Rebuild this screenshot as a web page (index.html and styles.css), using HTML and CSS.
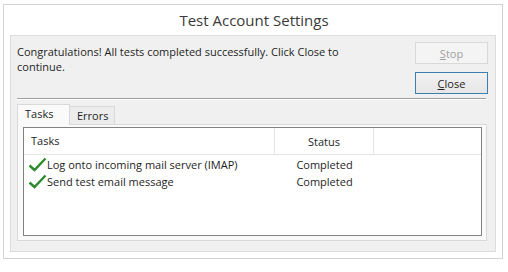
FILE: index.html
```html
<!DOCTYPE html>
<html>
<head>
<meta charset="utf-8">
<link rel="stylesheet" href="styles.css">
</head>
<body>
<div class="window">
  <div class="title">Test Account Settings</div>
  <div class="panel">
    <div class="top">
      <div class="msg">Congratulations! All tests completed successfully. Click Close to continue.</div>
      <div class="buttons">
        <button class="btn disabled"><u>S</u>top</button>
        <button class="btn default"><u>C</u>lose</button>
      </div>
    </div>
    <div class="sep"></div>
    <div class="tabs">
      <div class="tab active">Tasks</div>
      <div class="tab">Errors</div>
    </div>
    <div class="tabpanel">
      <div class="list">
        <div class="row head">
          <div class="c1">Tasks</div>
          <div class="c2">Status</div>
          <div class="c3"></div>
        </div>
        <div class="row">
          <div class="c1"><svg class="check" width="19" height="15" viewBox="0 0 19 15"><path d="M1.5 8.5 L6.5 13 L17.5 1.5" fill="none" stroke="#2c8a2c" stroke-width="2.4" stroke-linejoin="miter"/></svg>Log onto incoming mail server (IMAP)</div>
          <div class="c2">Completed</div>
          <div class="c3"></div>
        </div>
        <div class="row">
          <div class="c1"><svg class="check" width="19" height="15" viewBox="0 0 19 15"><path d="M1.5 8.5 L6.5 13 L17.5 1.5" fill="none" stroke="#2c8a2c" stroke-width="2.4" stroke-linejoin="miter"/></svg>Send test email message</div>
          <div class="c2">Completed</div>
          <div class="c3"></div>
        </div>
      </div>
    </div>
  </div>
</div>
</body>
</html>
```

FILE: styles.css
```css
html, body {
  margin: 0;
  padding: 0;
  background: #ffffff;
}
body {
  width: 508px;
  height: 272px;
  font-family: "Open Sans", "Noto Sans", sans-serif;
  font-size: 11px;
  color: #1e1e1e;
}
.window {
  margin: 4px 0 0 3px;
  width: 498px;
  height: 253px;
  border: 1px solid #d2d2d2;
  background: #ffffff;
  display: flex;
  flex-direction: column;
}
.title {
  height: 30px;
  line-height: 30px;
  text-align: center;
  font-size: 15px;
  color: #3a3a3a;
  padding-left: 2px;
}
.panel {
  flex: 1;
  margin: 0 6px 6px 6px;
  border: 1px solid #dcdcdc;
  background: #f0f0f0;
  display: flex;
  flex-direction: column;
}
.top {
  display: flex;
  padding: 6px 7px 0 6px;
}
.msg {
  flex: 1;
  padding-top: 2px;
  line-height: 15px;
  padding-right: 60px;
}
.buttons {
  display: flex;
  flex-direction: column;
  gap: 8px;
  width: 73px;
}
.btn {
  height: 22px;
  padding: 0;
  font-family: inherit;
  font-size: 11px;
  border: 1px solid #acacac;
  background: linear-gradient(#f0f0f0, #e5e5e5);
  color: #1e1e1e;
}
.btn.disabled {
  border-color: #d9d9d9;
  background: #f4f4f4;
  color: #a0a0a0;
}
.btn.default {
  border-color: #3c7fb1;
  background: linear-gradient(#f2f2f2, #e6e6e6);
}
.sep {
  margin: 4px 9px 0 6px;
  border-top: 1px solid #a0a0a0;
  border-bottom: 1px solid #ffffff;
}
.tabs {
  display: flex;
  align-items: flex-end;
  margin: 3px 0 0 6px;
  height: 21px;
}
.tab {
  height: 17px;
  line-height: 17px;
  padding: 0 7px;
  width: 30px;
  border: 1px solid #d9d9d9;
  border-bottom: none;
  background: #ececec;
  margin-left: -1px;
}
.tab:first-child {
  margin-left: 0;
}
.tab.active {
  height: 20px;
  line-height: 18px;
  width: 37px;
  background: #fafafa;
  position: relative;
  z-index: 1;
  margin-bottom: -1px;
}
.tabpanel {
  flex: 1;
  margin: 0 8px 10px 6px;
  border: 1px solid #d9d9d9;
  background: #fafafa;
  padding: 2px 4px 4px 5px;
  display: flex;
}
.list {
  flex: 1;
  border: 1px solid #828282;
  background: #ffffff;
}
.row {
  display: flex;
  height: 17px;
  line-height: 17px;
}
.row.head {
  height: 26px;
  line-height: 28px;
  border-bottom: 1px solid #e5e5e5;
  margin-bottom: 1px;
}
.c1 {
  width: 251px;
  padding-left: 4px;
  box-sizing: border-box;
  display: flex;
  align-items: center;
  white-space: nowrap;
}
.head .c1 {
  padding-left: 7px;
  border-right: 1px solid #e5e5e5;
}
.c2 {
  width: 99px;
  text-align: center;
  box-sizing: border-box;
}
.head .c2 {
  border-right: 1px solid #e5e5e5;
}
.c3 {
  flex: 1;
}
.check {
  margin-right: 0px;
  flex: none;
}
```
